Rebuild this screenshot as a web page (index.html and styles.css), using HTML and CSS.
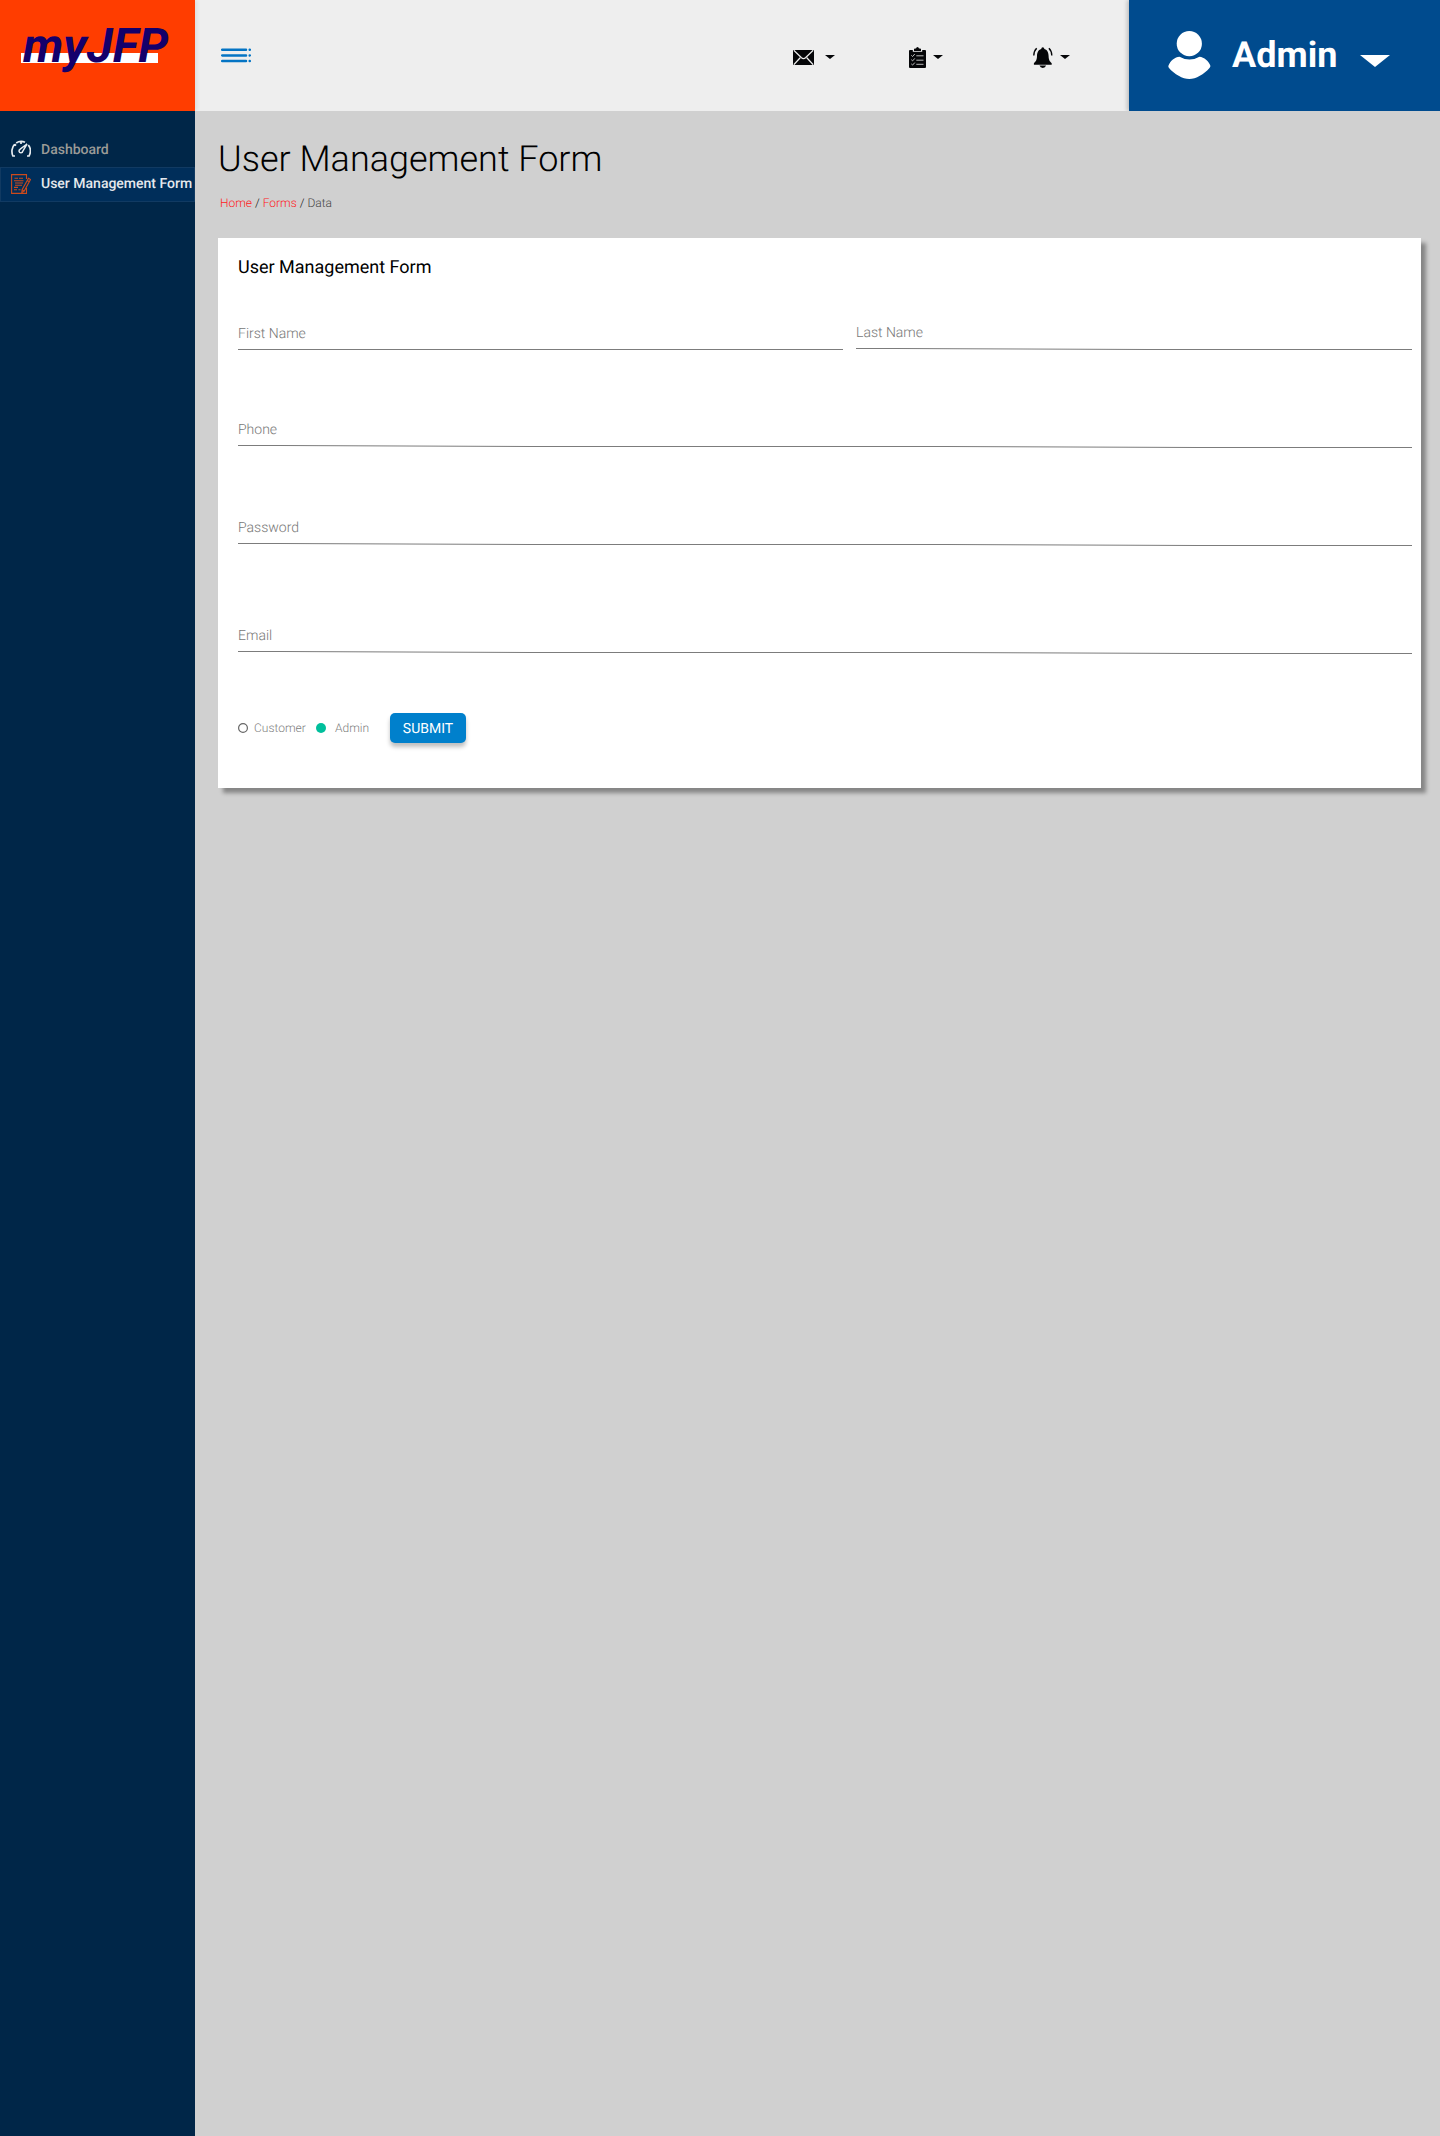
FILE: index.html
```html
<!DOCTYPE html>
<html lang="en">
<head>
<meta charset="utf-8">
<title>User Management Form</title>
<link rel="stylesheet" href="styles.css">
</head>
<body>
<div class="layout">
  <aside class="sidebar">
    <div class="logo"><span class="logo-text">myJFP</span></div>
    <nav class="menu">
      <a class="menu-item">
        <svg class="menu-icon" width="20" height="20" viewBox="0 0 20 20" fill="none" stroke="#e6ebef" stroke-width="1.7">
          <path d="M4 17H1.900C.3 13.500.6 8.200 3.600 5.300M5.200 4C8 2.200 11 2 14 3.300M17.300 6C19.800 9 19.800 13.500 18.100 17H16M10 2.800V5M3.600 5.200L5 6.700"/>
          <path d="M16 5L11.800 12.200A1.900 1.900 0 1 1 9.200 10.200Z" stroke-width="1.500"/>
        </svg>
        <span>Dashboard</span>
      </a>
      <a class="menu-item active">
        <svg class="menu-icon" width="20" height="20" viewBox="0 0 20 20" fill="none" stroke="#cc4a1c" stroke-width="1.1">
          <path d="M15.500 5V.6H.6V19.400H15.500V14M3.500 4.200H7M8 4.200H12M3 6.700H12.500M4 9H12M4 11.200H11M3 13.400H7M3 15.700H6M7.500 15.700H9.500"/>
          <path d="M17.500 4.300L19.500 5.500L13.200 17L10.800 18.700L11.100 15.700ZM16.300 6.500L18.300 7.700M11.100 15.700L13.200 17"/>
        </svg>
        <span>User Management Form</span>
      </a>
    </nav>
  </aside>
  <div class="main">
    <header class="topbar">
      <svg class="toggle" width="30" height="16" viewBox="0 0 30 16" fill="none" stroke="#0474c4" stroke-width="2.500" stroke-linecap="round">
        <path d="M1.200 1.700H25M1.200 7.400H25M1.200 13.100H25M28.700 1.700h.1M28.700 7.400h.1M28.700 13.100h.1"/>
      </svg>
      <div class="tools">
        <div class="tool mail">
          <svg width="21" height="15" viewBox="0 0 21 15"><path d="M0 0H21V15H0Z" fill="#050608"/><path d="M.8 .3L8.500 7.700Q10.500 9.400 12.500 7.700L20.200 .3M.8 14.700L7.200 7.800M20.200 14.700L13.800 7.800" fill="none" stroke="#ededed" stroke-width="1.300"/></svg>
          <i class="caret"></i>
        </div>
        <div class="tool tasks">
          <svg width="17" height="21" viewBox="0 0 17 21"><path d="M1 3H3.800V4.800H13.200V3H16Q17 3 17 4V20Q17 21 16 21H1Q0 21 0 20V4Q0 3 1 3Z" fill="#050608"/><path d="M5 4V2.200Q5 1.500 6 1.500H7Q7.300 0 8.500 0T10 1.500H11Q12 1.500 12 2.200V4Z" fill="#050608"/><path d="M2.300 8.300L3.600 9.500L5.800 7M7.300 8.800H14.500M2.300 12.700L3.600 13.900L5.800 11.400M7.300 13.200H14.500M2.300 16.900L3.600 18.100L5.800 15.600M7.300 17.300H14.500" fill="none" stroke="#cfcfcf" stroke-width=".9"/></svg>
          <i class="caret"></i>
        </div>
        <div class="tool alerts">
          <svg width="20" height="21" viewBox="0 0 20 21"><path d="M8.200 2Q8.400.3 9.800 .3T11.400 2C14.600 2.800 15.500 6 15.600 9C15.700 13 16.700 14.300 18.700 16.200V17.800H.9V16.200C2.900 14.300 3.900 13 4 9C4.100 6 5 2.800 8.200 2ZM6.500 18.600H13.100Q12.300 20.900 9.800 20.900T6.500 18.600Z" fill="#050608"/><path d="M3.700 1.200Q.8 4 .8 8.500M15.900 1.200Q18.800 4 18.800 8.500" fill="none" stroke="#050608" stroke-width="1.400"/></svg>
          <i class="caret"></i>
        </div>
      </div>
      <div class="account">
        <svg class="avatar" width="43" height="49" viewBox="0 0 43 49" fill="#fff"><circle cx="21.300" cy="12.700" r="12.600"/><path d="M11.500 25.700Q21.500 31.500 31.500 25.700C36 26 41 30.500 42.300 34.500Q42.700 35.500 41.700 36.800C36 43.500 28 48 21.300 48S6.500 43.500 .8 36.800Q0 35.500 .5 34.500C2 30 7 26 11.500 25.700Z"/></svg>
        <span class="account-name">Admin</span>
        <svg class="account-arrow" width="30" height="12" viewBox="0 0 30 12" fill="#fff"><path d="M0 0H30L15 12Z"/></svg>
      </div>
    </header>
    <main class="content">
      <h1 class="page-title">User Management Form</h1>
      <div class="breadcrumb"><a>Home</a> / <a>Forms</a> / <span>Data</span></div>
      <form class="card">
        <h2 class="card-title">User Management Form</h2>
        <div class="row names">
          <div class="field first"><label>First Name</label><svg class="rule" width="605" height="3"><path d="M0 .5H605"/></svg></div>
          <div class="field last"><label>Last Name</label><svg class="rule" width="556" height="3"><path d="M0 .5H41L291 1.500H556"/></svg></div>
        </div>
        <div class="field phone"><label>Phone</label><svg class="rule" width="1174" height="3"><path d="M0 .5H42L292 1.500H709L959 2.500H1174"/></svg></div>
        <div class="field password"><label>Password</label><svg class="rule" width="1174" height="3"><path d="M0 .5H42L292 1.500H709L959 2.500H1174"/></svg></div>
        <div class="field email"><label>Email</label><svg class="rule" width="1174" height="3"><path d="M0 .5H42L292 1.500H709L959 2.500H1174"/></svg></div>
        <div class="actions">
          <svg class="radio" width="10" height="10" viewBox="0 0 10 10"><circle cx="5" cy="5" r="4.400"/></svg><span class="role customer">Customer</span>
          <svg class="radio checked" width="10" height="10" viewBox="0 0 10 10"><circle cx="5" cy="5" r="5"/></svg><span class="role admin">Admin</span>
          <button type="button" class="submit">SUBMIT</button>
        </div>
      </form>
    </main>
  </div>
</div>
</body>
</html>
```
FILE: styles.css
```css
* { box-sizing: border-box; }
body { margin: 0; font-family: Roboto, "Liberation Sans", sans-serif; background: #d0d0d0; text-rendering: geometricPrecision; }
svg { display: block; flex: none; }
.layout { display: flex; width: 1440px; height: 2136px; }

.sidebar { width: 195px; background: #002648; }
.logo { position: relative; z-index: 1; height: 111px; padding: 18px 0 0 23px; background: #ff3d00; box-shadow: 2px 0 4px rgba(0,0,0,.07); clip-path: inset(0 -8px 0 0); }
.logo::before { content: ""; position: absolute; left: 21px; top: 53px; width: 137px; height: 10px; background: #fff; }
.logo-text { position: relative; display: block; font-size: 48px; line-height: 56px; font-weight: 700; font-style: italic; color: #14006b; white-space: nowrap; }
.menu { padding-top: 21px; }
.menu-item { display: flex; align-items: center; height: 35px; padding: 0 0 2px 11px; gap: 10px; font-size: 14px; font-weight: 500; line-height: 16px; color: #9b9b97; white-space: nowrap; }
.menu-item span { padding-top: 2px; }
.menu-item.active { padding: 0 0 1px 10px; background: #002e5a; border: 1px solid #113a62; color: #e5e9ed; }
.menu-item.active span { padding: 0; }

.main { width: 1245px; }
.topbar { display: flex; height: 111px; background: #eee; }
.toggle { margin: 48px 0 0 26px; }
.tools { display: flex; width: 904px; flex: none; margin-left: -26px; padding: 47px 0 0 568px; }
.tool { display: flex; height: 21px; align-items: center; }
.mail { width: 116px; gap: 11px; }
.tasks { width: 124px; gap: 7px; }
.alerts { gap: 7px; }
.caret { border: 5px solid transparent; border-top: 4px solid #050608; border-bottom: 0; margin-top: -1px; }
.account { position: relative; display: flex; width: 311px; flex: none; padding-left: 39px; background: #004b8e; box-shadow: -2px 0 4px rgba(0,0,0,.2); clip-path: inset(0 0 0 -8px); }
.avatar { margin-top: 31px; }
.account-name { margin: 34px 0 0 21px; width: 128px; font-size: 36px; line-height: 42px; font-weight: 700; color: #fff; }
.account-arrow { margin-top: 55px; }

.content { padding: 27px 19px 0 23px; }
.page-title { margin: 0; font-size: 36px; line-height: 42px; font-weight: 300; color: #000; }
.breadcrumb { margin: 16px 0 0 2px; font-size: 12px; line-height: 14px; font-weight: 300; color: #111; }
.breadcrumb a { color: #ff2020; }
.breadcrumb span { color: #444; }
.card { width: 1203px; height: 550px; margin: 28px 0 0; padding: 19px 0 0 20px; background: #fff; box-shadow: 5px 5px 4px rgba(0,0,0,.36); }
.card-title { margin: 0; font-size: 18px; line-height: 22px; font-weight: 400; color: #000; }
.row { display: flex; }
.names { margin-top: 45px; height: 28px; gap: 13px; }
.first { padding-top: 1px; }
.field label { display: block; height: 24px; padding-top: 1px; font-size: 14px; line-height: 16px; font-weight: 300; color: #777; }
.rule { stroke: #7c7c7c; stroke-width: 1; fill: none; }
.phone { margin-top: 69px; }
.password { margin-top: 71px; }
.email { margin-top: 81px; }
.actions { display: flex; align-items: center; height: 30px; margin-top: 59px; }
.radio { fill: none; stroke: #666; stroke-width: 1.2; }
.radio.checked { stroke: none; fill: #00bf9c; }
.role { font-size: 12px; line-height: 14px; font-weight: 300; color: #808080; }
.customer { width: 62px; margin-left: 6px; }
.admin { width: 55px; margin-left: 9px; }
.submit { width: 76px; height: 30px; padding: 2px 0 0; border: 0; border-radius: 5px; background: #0080cc; color: #fff; font: 400 14px/16px Roboto, sans-serif; text-rendering: geometricPrecision; box-shadow: 0 4px 4px rgba(0,0,0,.25); }
```
